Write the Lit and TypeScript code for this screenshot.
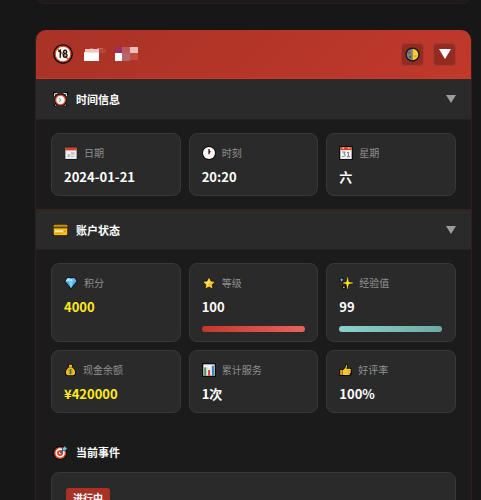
import { LitElement, html, svg, css, nothing, SVGTemplateResult } from "lit";
import { customElement, property, state } from "lit/decorators.js";
import { classMap } from "lit/directives/class-map.js";
import { styleMap } from "lit/directives/style-map.js";

const icons: Record<string, SVGTemplateResult> = {
  adult: svg`
    <circle cx="8" cy="8" r="7.9" fill="#0c0c0c"/>
    <circle cx="8" cy="8" r="6.3" fill="#fff" stroke="#e0481c" stroke-width="1"/>
    <path d="M3.6 3.8l8.8 8.6" stroke="#e0481c" stroke-width="1.1"/>
    <path d="M4.3 6.1l1.5-1v5.900M9.700 5a1.300 1.300 0 1 1-.01 0zM9.700 7.700a1.500 1.500 0 1 1-.01 0z" fill="none" stroke="#111" stroke-width="1.100"/>`,
  moon: svg`
    <circle cx="8" cy="8" r="7.6" fill="#141414"/>
    <path d="M8 1.8a6.2 6.2 0 0 0 0 12.4z" fill="#808080"/>
    <path d="M8 1.8a6.2 6.2 0 0 1 0 12.4z" fill="#f6cb35"/>
    <circle cx="4.8" cy="6" r="1" fill="#505050"/><circle cx="5.5" cy="10.3" r="1.2" fill="#505050"/>
    <circle cx="11" cy="9.8" r="1.2" fill="#dca91e"/>`,
  clock: svg`
    <path d="M1 5V1h4M11 1h4v4M3.5 13l-2 2.2M12.500 13l2 2.200" stroke="#050505" stroke-width="2.600" fill="none"/>
    <path d="M1.400 4.600l.4-2.800 3-.3M11.200 1.500l3 .3.4 2.800" fill="none" stroke="#d9dde2" stroke-width="1.200"/>
    <path d="M3.500 13.500l-1 1M12.500 13.500l1 1" stroke="#d9dde2" stroke-width="1.200"/>
    <circle cx="8" cy="8.500" r="6.500" fill="#0b0b0b"/>
    <circle cx="8" cy="8.500" r="5.200" fill="#f1f2f3" stroke="#dd4b24" stroke-width="1.300"/>
    <path d="M6.300 6.300l1.900 2.300-1.800 2" fill="none" stroke="#777" stroke-width=".9"/>`,
  card: svg`
    <rect x="0" y="2" width="16" height="13" rx="1.500" fill="#080808"/>
    <rect x=".7" y="3" width="14.600" height="11" rx="1" fill="#f8bd1d"/>
    <rect x=".7" y="3" width="14.600" height="1.600" fill="#c79113"/>
    <rect x=".7" y="4.800" width="14.600" height="2" fill="#5a430d"/>
    <rect x="2.200" y="9" width="10" height="1.600" fill="#fdf0c2"/>
    <rect x="11" y="9" width="2.600" height="1.600" fill="#e58c25"/>
    <rect x="2.200" y="11.700" width="7" height=".9" fill="#d89511"/>`,
  target: svg`
    <circle cx="7.600" cy="8.500" r="7.400" fill="#080808"/>
    <circle cx="7.600" cy="8.500" r="6.500" fill="#db4628"/>
    <circle cx="7.600" cy="8.500" r="4.100" fill="none" stroke="#fff" stroke-width="1.700"/>
    <circle cx="7.600" cy="8.500" r="1.200" fill="#fff"/>
    <path d="M7.600 8.500l4-4" stroke="#245d89" stroke-width="1.500"/>
    <path d="M10 6.200l.2-3L13 .7l.5 1.900 2 .6-2.400 2.800z" fill="#6fc7ef" stroke="#08131c" stroke-width=".5"/>`,
  date: svg`
    <rect x="1" y="1" width="14" height="14.500" fill="#090909"/>
    <rect x="1.500" y="2" width="13" height="12.800" fill="#edeeef"/>
    <rect x="1.500" y="2" width="13" height="3" fill="#dd3d1e"/>
    <path d="M8 7h4v3H8zM4 9h3v3.500H4zM8 11h4v1.500H8z" fill="#bfc3c8"/>`,
  calendar: svg`
    <rect x="0" y="0" width="16" height="16" rx="1" fill="#0b1015"/>
    <rect x="1.500" y="1.500" width="13" height="13.300" fill="#f5f6f7"/>
    <rect x="1.500" y="1.500" width="13" height="3.200" fill="#dc401d"/>
    <path d="M4 2.500h1.500M10.500 2.500H12" stroke="#fff" stroke-width="1.200"/>
    <path d="M3.700 6.900h3.400L5.500 9.200c3 0 2 3.500-1.900 2.700M9 8l1.700-1.100v5.400M9 12.300h3.500" fill="none" stroke="#707070" stroke-width="1.100"/>`,
  time: svg`
    <circle cx="8" cy="8" r="7.900" fill="#0a0a0a"/>
    <circle cx="8" cy="8" r="6.900" fill="#f7f7f7"/>
    <path d="M8 3.500V8.500M8 8.300l1.300-2.600" stroke="#151515" stroke-width="1.400"/>
    <circle cx="8" cy="8.700" r="1" fill="#cf4430"/>`,
  gem: svg`
    <path d="M3.500 1.500h9L15.600 6 8 15.500.4 6z" fill="#0b1115"/>
    <path d="M4 2.500h8L14.300 6 8 14 1.700 6z" fill="#48aee9"/>
    <path d="M4 2.500h3L5.500 6H1.700zM8 2.500L10.400 6H5.600z" fill="#bce8fc"/>
    <path d="M5.500 6h5L8 14z" fill="#82cef5"/>
    <path d="M12 2.500L14.300 6h-3.800L9 2.500z" fill="#6ebeec"/>`,
  star: svg`
    <path d="M8 .8l2.300 4.800 5.100.7-3.700 3.600.9 5.200L8 12.700l-4.600 2.400.9-5.200L.6 6.300l5.100-.7z" fill="#f7c62b" stroke="#090909" stroke-width=".8"/>
    <path d="M8 3.200l1.300 3.500-4.500 5.900 1-3.500L3 7l3.500-.3z" fill="#fce065"/>`,
  sparkles: svg`
    <path d="M9.800 0L12 5.600 16 8l-4 2.200L9.800 16 7.500 10.300 3.500 8l4-2.300z" fill="#080808"/>
    <circle cx="3.200" cy="4.400" r="2.500" fill="#090909"/><circle cx="5.500" cy="13" r="2.400" fill="#090909"/>
    <path d="M9.800 1.400l1.100 5.500 5 1.100-5 1.100-1.100 5.500-1.100-5.500-4-1.100 4-1.100z" fill="#ffe91e" stroke="#ffe91e" stroke-width=".5"/>
    <path d="M3.100 2.600l.6 1.300 1.300.5-1.300.6-.6 1.300-.5-1.300-1.300-.6 1.300-.5z" fill="#8ac7f2" stroke="#8ac7f2" stroke-width=".4"/>
    <circle cx="5.500" cy="13" r="1.100" fill="#dda193"/>`,
  money: svg`
    <path d="M5 .6h6l-.6 4c3.600 2 4.700 5 4.300 7.900-.3 2-1.700 3-3.300 3H4.600c-1.800 0-3-1-3.300-3C.9 9.600 2 6.600 5.600 4.600z" fill="#0a0a0a"/>
    <path d="M6 1.500h4L9.500 5c3.300 1.400 4.500 4.500 4.100 7.100-.2 1.500-1.100 2.400-2.400 2.400H4.800c-1.300 0-2.200-.9-2.400-2.400C2 9.500 3.200 6.400 6.500 5z" fill="#f6b924"/>
    <path d="M5.500 4.800h5" stroke="#c27d14" stroke-width="1"/>
    <path d="M10 7.800H7.300c-1.400 0-1.400 2 .2 2.100h1c1.800.1 1.700 2.200.1 2.200H6M8 6.700v6.500" fill="none" stroke="#387f38" stroke-width="1.100"/>`,
  chart: svg`
    <rect x="0" y="0" width="16" height="16" fill="#0b0b0b"/>
    <rect x="1.500" y="1.500" width="13" height="13" fill="#f2f4f5"/>
    <path d="M5.800 2v12.500M10.200 2v12.500M2 6h12M2 10h12" stroke="#d5dadd" stroke-width=".6"/>
    <rect x="2.500" y="5" width="2.300" height="9.500" fill="#44974d"/>
    <rect x="6.900" y="8" width="2.300" height="6.500" fill="#d84632"/>
    <rect x="11.300" y="3" width="2.300" height="11.500" fill="#397fca"/>`,
  thumb: svg`
    <path d="M8 .8c1.600-.6 3 .3 2.800 2.100l-.5 2.600h3.300c2 0 2.500 1.500 1.900 2.700l.1 4.300c-.3 1.700-1.300 3-3.200 3H.4V7h3.800C6 6 7.500 4 8 .8z" fill="#0a0a0a"/>
    <path d="M8.900 1.800c.8-.1 1.200.4 1 1.200l-.8 3.500h4.300c1.300 0 1.600 1.200.8 1.900.7.600.5 1.500-.1 1.900.4.800.1 1.500-.5 1.800.2 1.200-.5 2-1.500 2H5.600L4.500 13.500V8.300C6.700 7 8.300 4.900 8.900 1.800z" fill="#fbc730"/>
    <path d="M1.400 8h2.900v6H1.400z" fill="#e5a41f"/>
    <path d="M10.500 8.500h3.500M10.500 10.400h3.300M10.500 12.200h3" stroke="#d5981d" stroke-width=".6"/>`,
};

interface Stat {
  icon: string;
  label: string;
  value: string;
  gold?: boolean;
  narrow?: boolean;
  progress?: number;
  tone?: "red" | "teal";
}

const timeStats: Stat[] = [
  { icon: "date", label: "日期", value: "2024-01-21" },
  { icon: "time", label: "时刻", value: "20:20" },
  { icon: "calendar", label: "星期", value: "六" },
];

const accountStats: Stat[] = [
  { icon: "gem", label: "积分", value: "4000", gold: true },
  { icon: "star", label: "等级", value: "100", progress: 100, tone: "red" },
  { icon: "sparkles", label: "经验值", value: "99", progress: 99, tone: "teal" },
  { icon: "money", label: "现金余额", value: "¥420000", gold: true, narrow: true },
  { icon: "chart", label: "累计服务", value: "1次" },
  { icon: "thumb", label: "好评率", value: "100%", narrow: true },
];

@customElement("status-icon")
class StatusIcon extends LitElement {
  @property() name = "";

  static styles = css`
    :host { display: block; flex: none; }
    .drawing { display: block; width: 100%; height: 100%; }
  `;

  render() {
    return html`<svg class="drawing" viewBox="0 0 16 16" aria-hidden="true">${icons[this.name]}</svg>`;
  }
}

@customElement("stat-card")
class StatCard extends LitElement {
  @property({ attribute: false }) stat!: Stat;

  static styles = css`
    :host {
      display: block;
      box-sizing: border-box;
      min-width: 0;
      padding: 10px 12px 8px;
      border: 1px solid #383838;
      border-radius: 8px;
      background: #2a2a2a;
    }
    .label {
      display: flex;
      align-items: center;
      gap: 6px;
      height: 18px;
      color: #8f8f8f;
      font-size: 10px;
      line-height: 16px;
      white-space: nowrap;
    }
    .icon { width: 14px; height: 14px; }
    .icon.narrow { width: 13px; }
    .value {
      margin-top: 5px;
      color: #fff;
      font-size: 13px;
      font-weight: 700;
      line-height: 20px;
    }
    .value.gold { color: #ffeb1f; }
    .track { margin: 9px 0 1px; height: 6px; }
    .fill { height: 100%; border-radius: 3px; }
    .fill.red { background: linear-gradient(90deg, #c0392b, #e8635d); }
    .fill.teal { background: linear-gradient(90deg, #88d3ce, #6ea9a5); }
  `;

  render() {
    const { icon, label, value, gold, narrow, progress, tone } = this.stat;
    return html`
      <div class="label">
        <status-icon class=${classMap({ icon: true, narrow: !!narrow })} name=${icon}></status-icon>
        <span>${label}</span>
      </div>
      <div class=${classMap({ value: true, gold: !!gold })}>${value}</div>
      ${progress === undefined
        ? nothing
        : html`<div class="track" role="progressbar" aria-label=${label} aria-valuenow=${progress}>
            <div class="fill ${tone}" style=${styleMap({ width: `${progress}%` })}></div>
          </div>`}
    `;
  }
}

@customElement("app-root")
class AppRoot extends LitElement {
  @state() private closed = new Set<string>();

  static styles = css`
    :host {
      display: block;
      box-sizing: border-box;
      height: 100vh;
      overflow: hidden;
      padding: 0 9px 0 35px;
      background: #171717;
      font-family: "Noto Sans CJK SC", "Noto Sans", sans-serif;
      color: #fff;
    }
    .previous {
      box-sizing: border-box;
      height: 24px;
      margin-top: -20px;
      border: 1px solid #34191f;
      border-radius: 10px;
      background: #1b1b1b;
    }
    .panel {
      margin-top: 26px;
      border: 1px solid #351c1e;
      border-top: 0;
      border-radius: 10px;
      background: #1b1b1b;
    }
    .top {
      display: flex;
      align-items: center;
      box-sizing: border-box;
      height: 49px;
      padding: 0 15px 0 17px;
      border-bottom: 1px solid #cc3a22;
      border-radius: 10px 10px 0 0;
      background: linear-gradient(135deg, #a93226, #c0392b);
    }
    .badge-icon { width: 20px; height: 20px; }
    .mosaic { display: block; width: 56px; height: 16px; margin-left: 10px; }
    .tools { display: flex; gap: 9px; margin-left: auto; }
    .tool {
      display: grid;
      place-items: center;
      width: 23px;
      height: 23px;
      padding: 0;
      border: 1px solid #a6382e;
      border-radius: 4px;
      background: #942b22;
    }
    .phase { width: 15px; height: 15px; }
    .arrow { display: block; width: 12px; height: 10px; fill: #fff; }
    .heading { margin: 0; font-size: 11px; font-weight: 700; }
    .toggle {
      display: flex;
      align-items: center;
      gap: 8px;
      box-sizing: border-box;
      width: 100%;
      height: 41px;
      padding: 0 15px 0 17px;
      border: 0;
      border-bottom: 1px solid #222;
      background: #2a2a2a;
      color: #fff;
      font: inherit;
      text-align: left;
    }
    .ruled { border-top: 1px solid #3c2020; }
    .title-icon { width: 15px; height: 15px; }
    .caret { width: 10px; height: 8px; margin-left: auto; fill: #9c9c9c; }
    .stats {
      display: grid;
      grid-template-columns: repeat(3, minmax(0, 1fr));
      gap: 8px;
      padding: 13px 15px;
    }
    .events { padding: 13px 15px; }
    .event-title {
      display: flex;
      align-items: center;
      gap: 8px;
      height: 26px;
      padding-left: 2px;
      margin-bottom: 7px;
    }
    .event {
      min-height: 60px;
      padding: 15px 14px;
      border: 1px solid #383838;
      border-radius: 8px;
      background: #2a2a2a;
    }
    .tag {
      width: fit-content;
      padding: 0 7px;
      border-radius: 3px;
      background: #a93226;
      font-size: 10px;
      font-weight: 700;
      line-height: 20px;
    }
  `;

  private toggle(id: string) {
    const next = new Set(this.closed);
    next.has(id) ? next.delete(id) : next.add(id);
    this.closed = next;
  }

  private section(id: string, icon: string, title: string, stats: Stat[], ruled: boolean) {
    const open = !this.closed.has(id);
    return html`
      <section>
        <h2 class="heading">
          <button
            class=${classMap({ toggle: true, ruled })}
            aria-expanded=${open ? "true" : "false"}
            @click=${() => this.toggle(id)}
          >
            <status-icon class="title-icon" name=${icon}></status-icon>
            <span>${title}</span>
            <svg class="caret" viewBox="0 0 10 8" aria-hidden="true"><path d="M0 0h10L5 8z" /></svg>
          </button>
        </h2>
        ${open
          ? html`<div class="stats">${stats.map((s) => html`<stat-card .stat=${s}></stat-card>`)}</div>`
          : nothing}
      </section>
    `;
  }

  render() {
    return html`
      <div class="previous"></div>
      <main class="panel">
        <header class="top">
          <status-icon class="badge-icon" name="adult"></status-icon>
          <svg class="mosaic" viewBox="0 -1 56 16" aria-hidden="true">
            <path d="M2 2h14v4H2z" fill="#edc6c0" />
            <path d="M7 1h3v1H7zM14 1h6v1h-6z" fill="#c9685e" />
            <path d="M16 2h7v4h-7z" fill="#b4453a" />
            <path d="M1 5h15v9H1z" fill="#fff" />
            <path d="M1 5h15v1H1z" fill="#f4dcd8" />
            <path d="M32 0h7v6h-7z" fill="#a42b61" />
            <path d="M39 0h8v6h-8z" fill="#b95a62" />
            <path d="M47 0h8v6h-8z" fill="#eabfb9" />
            <path d="M32 6h7v8h-7z" fill="#fff" />
            <path d="M39 6h8v8h-8z" fill="#b5666a" />
            <path d="M47 6h8v7h-8z" fill="#c44b3f" />
          </svg>
          <div class="tools">
            <button class="tool" aria-label="切换主题">
              <status-icon class="phase" name="moon"></status-icon>
            </button>
            <button class="tool" aria-label="折叠">
              <svg class="arrow" viewBox="0 0 12 10" aria-hidden="true"><path d="M0 0h12L6 10z" /></svg>
            </button>
          </div>
        </header>
        ${this.section("time", "clock", "时间信息", timeStats, false)}
        ${this.section("account", "card", "账户状态", accountStats, true)}
        <section class="events">
          <h2 class="heading event-title">
            <status-icon class="title-icon" name="target"></status-icon>
            <span>当前事件</span>
          </h2>
          <div class="event"><div class="tag">进行中</div></div>
        </section>
      </main>
    `;
  }
}
